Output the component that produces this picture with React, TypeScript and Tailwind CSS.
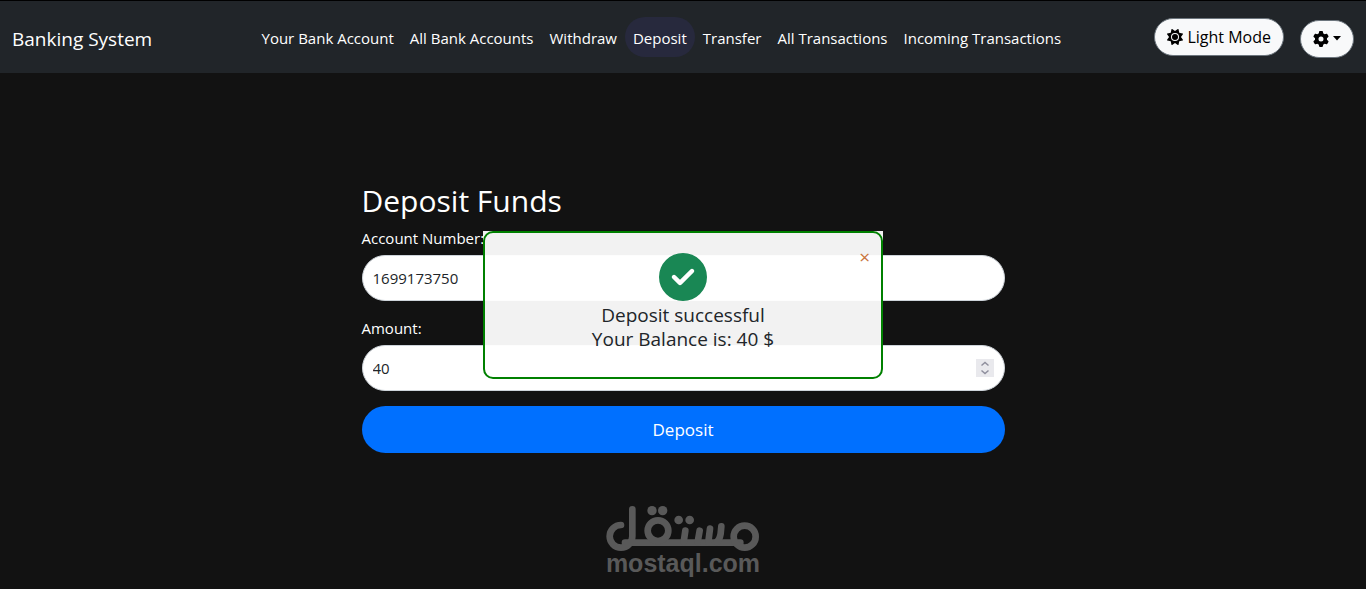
import React from "react";
import { FaCircleCheck, FaGear, FaSun } from "react-icons/fa6";

const links = [
  { label: "Your Bank Account", href: "#account" },
  { label: "All Bank Accounts", href: "#accounts" },
  { label: "Withdraw", href: "#withdraw" },
  { label: "Deposit", href: "#deposit", active: true },
  { label: "Transfer", href: "#transfer" },
  { label: "All Transactions", href: "#transactions" },
  { label: "Incoming Transactions", href: "#incoming" },
];

const Navbar = () => {
  return (
    <header className="flex h-[73px] items-center justify-between border-t border-black bg-[#212529] px-3">
      <a href="#home" className="mt-1 mr-4 text-[19px] leading-8 text-white">
        Banking System
      </a>
      <nav aria-label="Main" className="flex items-center">
        {links.map((link) => (
          <a
            key={link.label}
            href={link.href}
            aria-current={link.active ? "page" : undefined}
            className={`rounded-full px-2 pt-[9px] pb-[7px] text-[15px] leading-6 whitespace-nowrap text-white ${
              link.active ? "bg-[#27293d]" : ""
            }`}
          >
            {link.label}
          </a>
        ))}
      </nav>
      <div className="flex items-center gap-4">
        <button
          type="button"
          className="flex h-[38px] items-center gap-1 rounded-full border border-[#6c757d] bg-[#f8f9fa] px-3 text-[16px] whitespace-nowrap text-black"
        >
          <FaSun size={16} aria-hidden />
          Light Mode
        </button>
        <button
          type="button"
          aria-label="Settings"
          className="mt-1 flex h-[38px] items-center gap-1 rounded-full border border-[#6c757d] bg-[#f8f9fa] px-3 text-black"
        >
          <FaGear size={16} aria-hidden />
          <svg width="8" height="6" viewBox="0 0 8 6" fill="currentColor" aria-hidden>
            <path d="M0 0h8L4 4.500z" />
          </svg>
        </button>
      </div>
    </header>
  );
};

const SuccessAlert = () => {
  return (
    <div
      role="alertdialog"
      aria-labelledby="alert-title"
      className="absolute inset-x-0 top-[50px] mx-auto w-[400px] bg-white/95"
    >
      <div className="flex h-[148px] flex-col items-center rounded-[10px] border-2 border-[#008000] pt-5 text-[19px] leading-6 text-[#212529]">
        <FaCircleCheck size={48} className="text-[#198754]" aria-hidden />
        <p id="alert-title" className="pt-0.5">
          Deposit successful
        </p>
        <p>Your Balance is: 40 $</p>
      </div>
      <button
        type="button"
        aria-label="Close"
        className="absolute top-[14px] right-[13px] text-[19px] leading-6 text-[#c9753d]"
      >
        ×
      </button>
    </div>
  );
};

const labelStyles = "mb-[5px] block text-[15px] leading-6";

const inputStyles =
  "h-[46px] w-full rounded-full border border-[#ced4da] bg-white pl-[10px] text-[15px] text-[#212529] outline-none [&::-webkit-inner-spin-button]:appearance-none";

const DepositForm = () => {
  return (
    <form className="text-white">
      <h1 className="mb-[5px] text-[30px] leading-10">Deposit Funds</h1>
      <label htmlFor="account" className={labelStyles}>
        Account Number:
      </label>
      <input id="account" type="text" defaultValue="1699173750" className={inputStyles} />
      <label htmlFor="amount" className={`mt-[15px] ${labelStyles}`}>
        Amount:
      </label>
      <div className="relative">
        <input id="amount" type="number" defaultValue="40" className={inputStyles} />
        <span
          className="absolute top-[14px] right-[11px] flex h-[18px] w-[18px] items-center justify-center bg-[#e9e9ed] text-[#8f8f9d]"
          aria-hidden
        >
          <svg width="10" height="14" viewBox="0 0 10 14" fill="none" stroke="currentColor" strokeWidth="1.5">
            <path d="M1.500 4.500 5 1.500l3.500 3M1.500 9.500 5 12.500l3.500-3" />
          </svg>
        </span>
      </div>
      <button
        type="submit"
        className="mt-[15px] h-[47px] w-full rounded-full bg-[#0070ff] text-[17px] text-white"
      >
        Deposit
      </button>
    </form>
  );
};

const Logo = () => {
  return (
    <div className="flex flex-col items-center text-[#595959]">
      <svg
        width="154"
        height="46"
        viewBox="47 30 462 138"
        fill="none"
        stroke="currentColor"
        strokeWidth="20"
        strokeLinecap="round"
        aria-hidden
      >
        <path d="M92 90a34 34 0 1 0 34 34V43" />
        <path d="M104 143H450" />
        <circle cx="203" cy="107" r="31" />
        <circle cx="463" cy="125" r="33" />
        <path d="M285 107l-5 34M328 107l-6 34M359 101l-5 40M393 94l-2 22q-3 18-12 25" />
        <g fill="currentColor" stroke="none">
          <circle cx="185" cy="47" r="14" />
          <circle cx="217" cy="47" r="14" />
          <circle cx="265" cy="75" r="13" />
          <circle cx="298" cy="75" r="13" />
        </g>
      </svg>
      <p className="font-['Liberation_Sans',sans-serif] text-[25px] leading-6 font-bold">mostaql.com</p>
    </div>
  );
};

const App = () => {
  return (
    <div className="min-h-screen bg-[#121212] font-['Open_Sans',sans-serif]">
      <Navbar />
      <main className="relative mx-auto mt-[108px] w-full max-w-[643px]">
        <DepositForm />
        <SuccessAlert />
      </main>
      <footer className="pt-[52px]">
        <Logo />
      </footer>
    </div>
  );
};

export default App;
